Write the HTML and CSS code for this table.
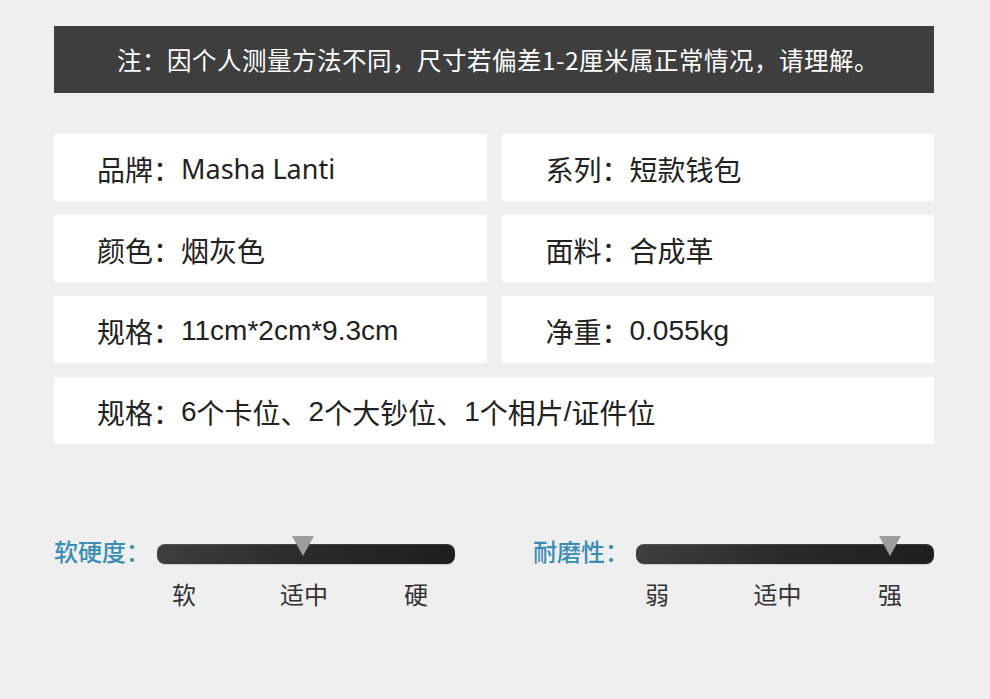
FILE: index.html
```html
<!DOCTYPE html>
<html lang="zh-CN">
<head>
<meta charset="utf-8">
<title>产品参数</title>
<link rel="stylesheet" href="styles.css">
</head>
<body>
<div class="page">
  <div class="notice">注：因个人测量方法不同，尺寸若偏差1-2厘米属正常情况，请理解。</div>
  <div class="specs">
    <div class="cell">品牌：<span class="brand">Masha Lanti</span></div>
    <div class="cell right">系列：短款钱包</div>
    <div class="cell">颜色：烟灰色</div>
    <div class="cell right">面料：合成革</div>
    <div class="cell">规格：<span class="num">11cm*2cm*9.3cm</span></div>
    <div class="cell right">净重：<span class="num">0.055kg</span></div>
    <div class="cell full">规格：<span class="num">6</span>个卡位、<span class="num">2</span>个大钞位、<span class="num">1</span>个相片<span class="num">/</span>证件位</div>
  </div>
  <div class="rating">
    <div class="slider">
      <div class="slider-top">
        <div class="label">软硬度：</div>
        <div class="bar"><span class="marker" style="left:146px"></span></div>
      </div>
      <div class="ticks soft">
        <span>软</span><span class="mid">适中</span><span>硬</span>
      </div>
    </div>
    <div class="slider">
      <div class="slider-top">
        <div class="label">耐磨性：</div>
        <div class="bar"><span class="marker" style="left:254px"></span></div>
      </div>
      <div class="ticks wear">
        <span>弱</span><span class="mid">适中</span><span>强</span>
      </div>
    </div>
  </div>
</div>
</body>
</html>
```

FILE: styles.css
```css
html, body {
  margin: 0;
  padding: 0;
  background: #efefef;
}
body {
  font-family: "Noto Sans CJK SC", "Noto Sans", sans-serif;
  width: 990px;
  height: 699px;
  overflow: hidden;
}
.page {
  padding: 26px 56px 0 54px;
}
.notice {
  height: 67px;
  background: #3e3e3e;
  color: #ffffff;
  font-size: 24.5px;
  display: flex;
  align-items: center;
  justify-content: center;
  padding-left: 8px;
  box-sizing: border-box;
  letter-spacing: 0.5px;
}
.specs {
  margin-top: 41px;
  display: grid;
  grid-template-columns: 1fr 1fr;
  column-gap: 15px;
  row-gap: 14px;
}
.cell {
  height: 67px;
  background: #ffffff;
  display: flex;
  align-items: center;
  padding-left: 43px;
  padding-top: 2px;
  box-sizing: border-box;
  font-size: 28px;
  color: #222222;
  white-space: pre;
}
.cell.right {
  padding-left: 44px;
}
.cell.full {
  grid-column: span 2;
}
.brand {
  font-family: "Noto Sans", sans-serif;
  font-size: 27px;
}
.num {
  font-family: "Liberation Sans", Arial, sans-serif;
}
.rating {
  margin-top: 95px;
  display: flex;
  justify-content: space-between;
}
.slider {
  width: 401px;
  display: flex;
  flex-direction: column;
}
.slider-top {
  display: flex;
  align-items: center;
  height: 30px;
}
.label {
  width: 103px;
  flex: none;
  font-size: 24px;
  line-height: 30px;
  margin-top: -6px;
  color: #3a8db3;
  font-weight: 500;
  white-space: nowrap;
}
.bar {
  position: relative;
  width: 298px;
  height: 20px;
  border-radius: 8px;
  background: linear-gradient(to right, #3e3e3e, #2a2a2a 50%, #1e1e1e);
  box-shadow: inset 0 1px 1px rgba(255,255,255,0.12), 0 1px 1px rgba(0,0,0,0.15);
}
.marker {
  position: absolute;
  top: -8px;
  width: 0;
  height: 0;
  margin-left: -11px;
  border-left: 11px solid transparent;
  border-right: 11px solid transparent;
  border-top: 20px solid #9d9d9d;
}
.ticks {
  margin-top: 10px;
  margin-left: 103px;
  display: flex;
  justify-content: space-between;
  font-size: 24px;
  line-height: 30px;
  color: #333333;
}
.ticks .mid {
  margin-left: 8px;
}
.ticks.soft {
  padding: 0 27px 0 15px;
}
.ticks.wear {
  padding: 0 32px 0 9px;
}
```
